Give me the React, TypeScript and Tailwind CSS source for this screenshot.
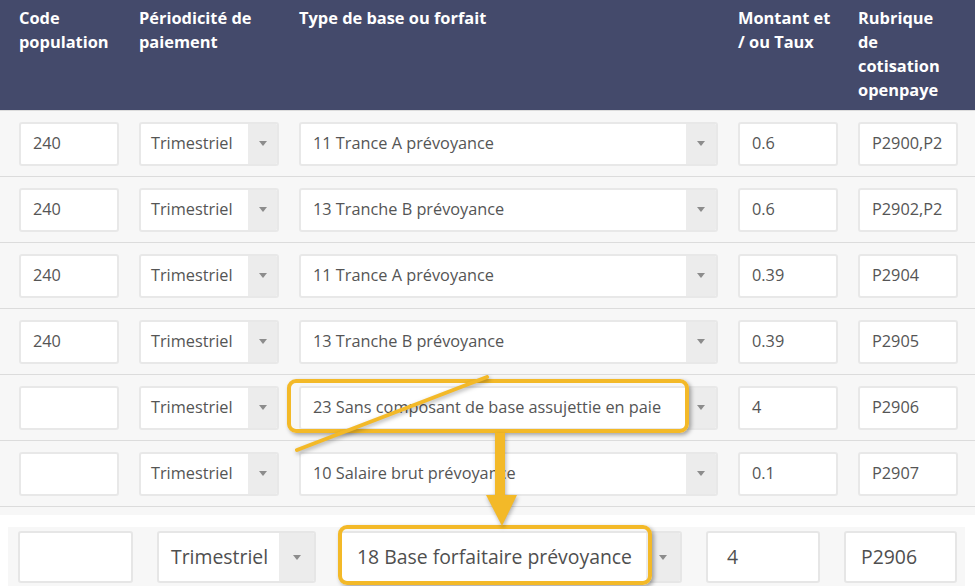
import React from 'react';

// lignes du tableau des cotisations
const rows = [
  { code: '240', periode: 'Trimestriel', type: '11 Trance A prévoyance', montant: '0.6', rubrique: 'P2900,P2' },
  { code: '240', periode: 'Trimestriel', type: '13 Tranche B prévoyance', montant: '0.6', rubrique: 'P2902,P2' },
  { code: '240', periode: 'Trimestriel', type: '11 Trance A prévoyance', montant: '0.39', rubrique: 'P2904' },
  { code: '240', periode: 'Trimestriel', type: '13 Tranche B prévoyance', montant: '0.39', rubrique: 'P2905' },
  { code: '', periode: 'Trimestriel', type: '23 Sans composant de base assujettie en paie', montant: '4', rubrique: 'P2906' },
  { code: '', periode: 'Trimestriel', type: '10 Salaire brut prévoyance', montant: '0.1', rubrique: 'P2907' },
];

function Caret() {
  return (
    <svg width="8" height="5" viewBox="0 0 8 5">
      <path d="M0 0h8L4 5z" fill="#8c8c8c" />
    </svg>
  );
}

export default function App() {
  return (
    <div className="relative h-[586px] w-[975px] overflow-hidden bg-white font-['Open_Sans',sans-serif]">
      {/* en-tête */}
      <div className="flex h-[110px] gap-[20px] bg-[#444a6b] pl-[19px] pt-[6px] text-[16.4px] font-bold leading-[24px] text-white">
        <div className="w-[100px]">Code<br />population</div>
        <div className="w-[140px]">Périodicité de<br />paiement</div>
        <div className="w-[419px]">Type de base ou forfait</div>
        <div className="w-[100px]">Montant et<br />/ ou Taux</div>
        <div className="w-[100px]">Rubrique<br />de<br />cotisation<br />openpaye</div>
      </div>

      {rows.map((r, i) => (
        <div key={i} className="flex h-[66px] items-center gap-[20px] border-t border-[#dcdcdc] bg-[#f7f7f7] pl-[19px] text-[16.3px] text-[#555]">
          <div className="flex h-[44px] w-[100px] items-center rounded-[3px] border-2 border-[#e8e8e8] bg-white px-[12px]">{r.code}</div>
          <div className="flex h-[44px] w-[140px] overflow-hidden rounded-[3px] border-2 border-[#e8e8e8] bg-white">
            <div className="flex flex-1 items-center pl-[10px]">{r.periode}</div>
            <div className="flex w-[29px] items-center justify-center bg-[#ececec]"><Caret /></div>
          </div>
          <div className="flex h-[44px] w-[419px] overflow-hidden rounded-[3px] border-2 border-[#e8e8e8] bg-white">
            <div className="flex flex-1 items-center overflow-hidden whitespace-nowrap pl-[12px]">{r.type}</div>
            <div className="flex w-[30px] items-center justify-center bg-[#ececec]"><Caret /></div>
          </div>
          <div className="flex h-[44px] w-[100px] items-center rounded-[3px] border-2 border-[#e8e8e8] bg-white px-[12px]">{r.montant}</div>
          <div className="flex h-[44px] w-[100px] items-center overflow-hidden whitespace-nowrap rounded-[3px] border-2 border-[#e8e8e8] bg-white px-[12px]">{r.rubrique}</div>
        </div>
      ))}
      <div className="h-[9px] border-t border-[#dcdcdc] bg-[#f7f7f7]" />

      {/* ligne agrandie */}
      <div className="ml-[8px] mt-[12px] flex h-[60px] w-[957px] gap-[24px] bg-[#f7f7f7] pl-[10px] pt-[4px] text-[19.4px] text-[#4f4f4f]">
        <div className="h-[52px] w-[115px] rounded-[3px] border-2 border-[#e6e6e6] bg-white" />
        <div className="flex h-[52px] w-[159px] overflow-hidden rounded-[3px] border-2 border-[#e6e6e6] bg-white">
          <div className="flex flex-1 items-center pl-[12px]">Trimestriel</div>
          <div className="flex w-[35px] items-center justify-center bg-[#ececec]"><Caret /></div>
        </div>
        <div className="flex h-[52px] w-[342px] overflow-hidden rounded-[3px] border-2 border-[#e6e6e6] bg-white">
          <div className="flex flex-1 items-center whitespace-nowrap pl-[15px]">18 Base forfaitaire prévoyance</div>
          <div className="flex w-[34px] items-center justify-center bg-[#ececec]"><Caret /></div>
        </div>
        <div className="flex h-[52px] w-[114px] items-center rounded-[3px] border-2 border-[#e6e6e6] bg-white pl-[19px]">4</div>
        <div className="flex h-[52px] w-[113px] items-center rounded-[3px] border-2 border-[#e6e6e6] bg-white pl-[15px]">P2906</div>
      </div>

      {/* annotations */}
      <div className="absolute left-[287px] top-[379px] h-[54px] w-[402px] rounded-[9px] border-4 border-[#f3b928] shadow-[2px_2px_4px_rgba(0,0,0,0.35)]" />
      <div className="absolute left-[338px] top-[525px] h-[60px] w-[314px] rounded-[9px] border-4 border-[#f3b928] shadow-[2px_2px_4px_rgba(0,0,0,0.35)]" />
      <svg className="pointer-events-none absolute left-0 top-0 drop-shadow-[1px_2px_2px_rgba(0,0,0,0.3)]" width="975" height="586" viewBox="0 0 975 586">
        <line x1="487" y1="377" x2="297" y2="450" stroke="#f3b928" strokeWidth="4" strokeLinecap="round" />
        <rect x="495" y="433" width="10" height="64" fill="#f3b928" />
        <path d="M486 495h31l-15 31z" fill="#f3b928" />
      </svg>
    </div>
  );
}
